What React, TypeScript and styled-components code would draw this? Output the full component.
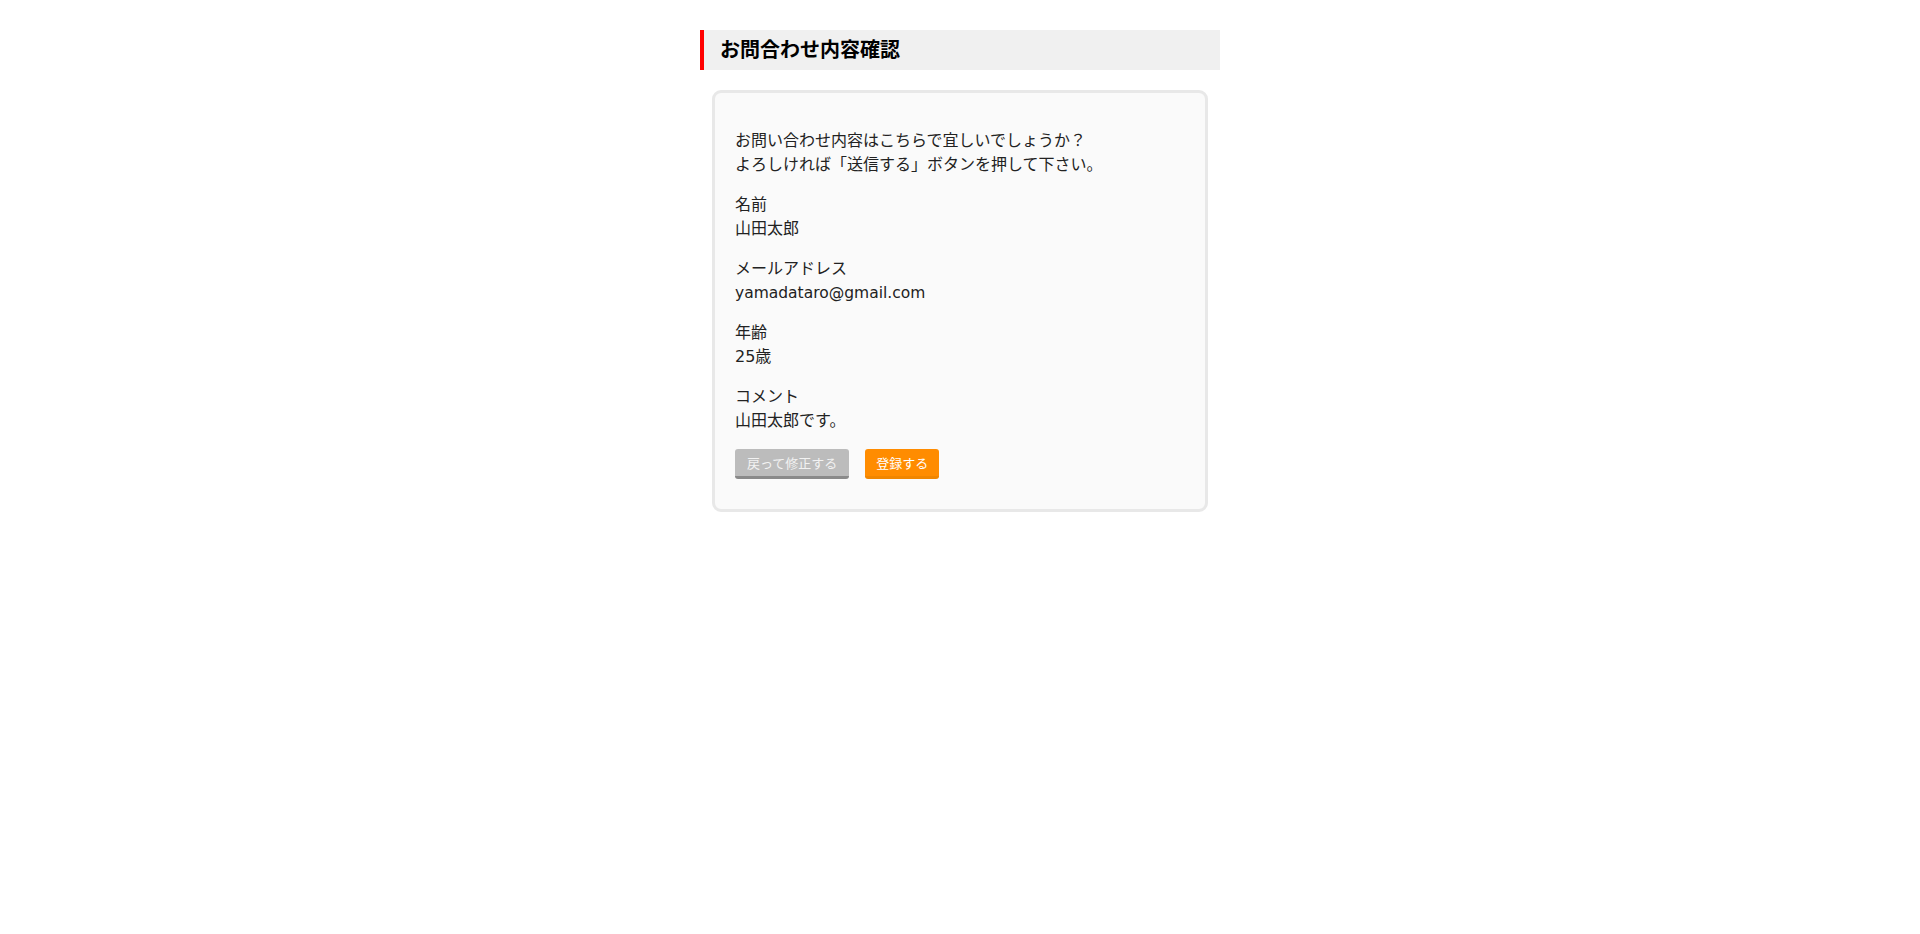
import React from "react";
import styled, { createGlobalStyle } from "styled-components";

const GlobalStyle = createGlobalStyle`
  html, body {
    margin: 0;
    padding: 0;
    background: #ffffff;
  }
  body {
    font-family: "DejaVu Sans", "Noto Sans CJK JP", sans-serif;
    color: #222;
  }
`;

const Page = styled.main`
  width: 520px;
  margin: 0 auto;
  padding-top: 30px;
`;

const Heading = styled.h2`
  margin: 0;
  height: 40px;
  box-sizing: border-box;
  display: flex;
  align-items: center;
  background: #f0f0f0;
  border-left: 4px solid #ff0000;
  padding: 0 0 3px 16px;
  font-family: "Noto Sans CJK JP", sans-serif;
  font-size: 20px;
  font-weight: 700;
  color: #000;
`;

const Card = styled.section`
  margin: 20px 12px 0;
  background: #fafafa;
  border: 3px solid #e8e8e8;
  border-radius: 9px;
  padding: 20px 20px 30px;
`;

const Para = styled.p`
  margin: 16px 0;
  font-size: 16px;
  line-height: 24px;
`;

const Latin = styled.span`
  font-size: 15.5px;
`;

const Buttons = styled.div`
  display: flex;
  gap: 16px;
  margin-top: 16px;
`;

const Button = styled.button<{ $variant: "back" | "submit" }>`
  height: 30px;
  padding: 0 ${(p) => (p.$variant === "back" ? "12px" : "11px")};
  border: none;
  border-radius: 3px;
  border-bottom: 3px solid ${(p) => (p.$variant === "back" ? "#8a8a8a" : "#f08600")};
  background: ${(p) => (p.$variant === "back" ? "#bcbcbc" : "#ff8c00")};
  color: ${(p) => (p.$variant === "back" ? "#f2f2f2" : "#ffffff")};
  font-family: "Noto Sans CJK JP", sans-serif;
  font-size: 13px;
  cursor: pointer;
  box-sizing: border-box;
`;

const items: { label: string; value: React.ReactNode }[] = [
  { label: "名前", value: "山田太郎" },
  { label: "メールアドレス", value: <Latin>yamadataro@gmail.com</Latin> },
  { label: "年齢", value: "25歳" },
  { label: "コメント", value: "山田太郎です。" },
];

export default function App() {
  return (
    <>
      <GlobalStyle />
      <Page>
        <Heading>お問合わせ内容確認</Heading>
        <Card>
          <Para>
            お問い合わせ内容はこちらで宜しいでしょうか？
            <br />
            よろしければ「送信する」ボタンを押して下さい。
          </Para>
          {items.map((it) => (
            <Para key={it.label}>
              {it.label}
              <br />
              {it.value}
            </Para>
          ))}
          <Buttons>
            <Button $variant="back">戻って修正する</Button>
            <Button $variant="submit">登録する</Button>
          </Buttons>
        </Card>
      </Page>
    </>
  );
}
